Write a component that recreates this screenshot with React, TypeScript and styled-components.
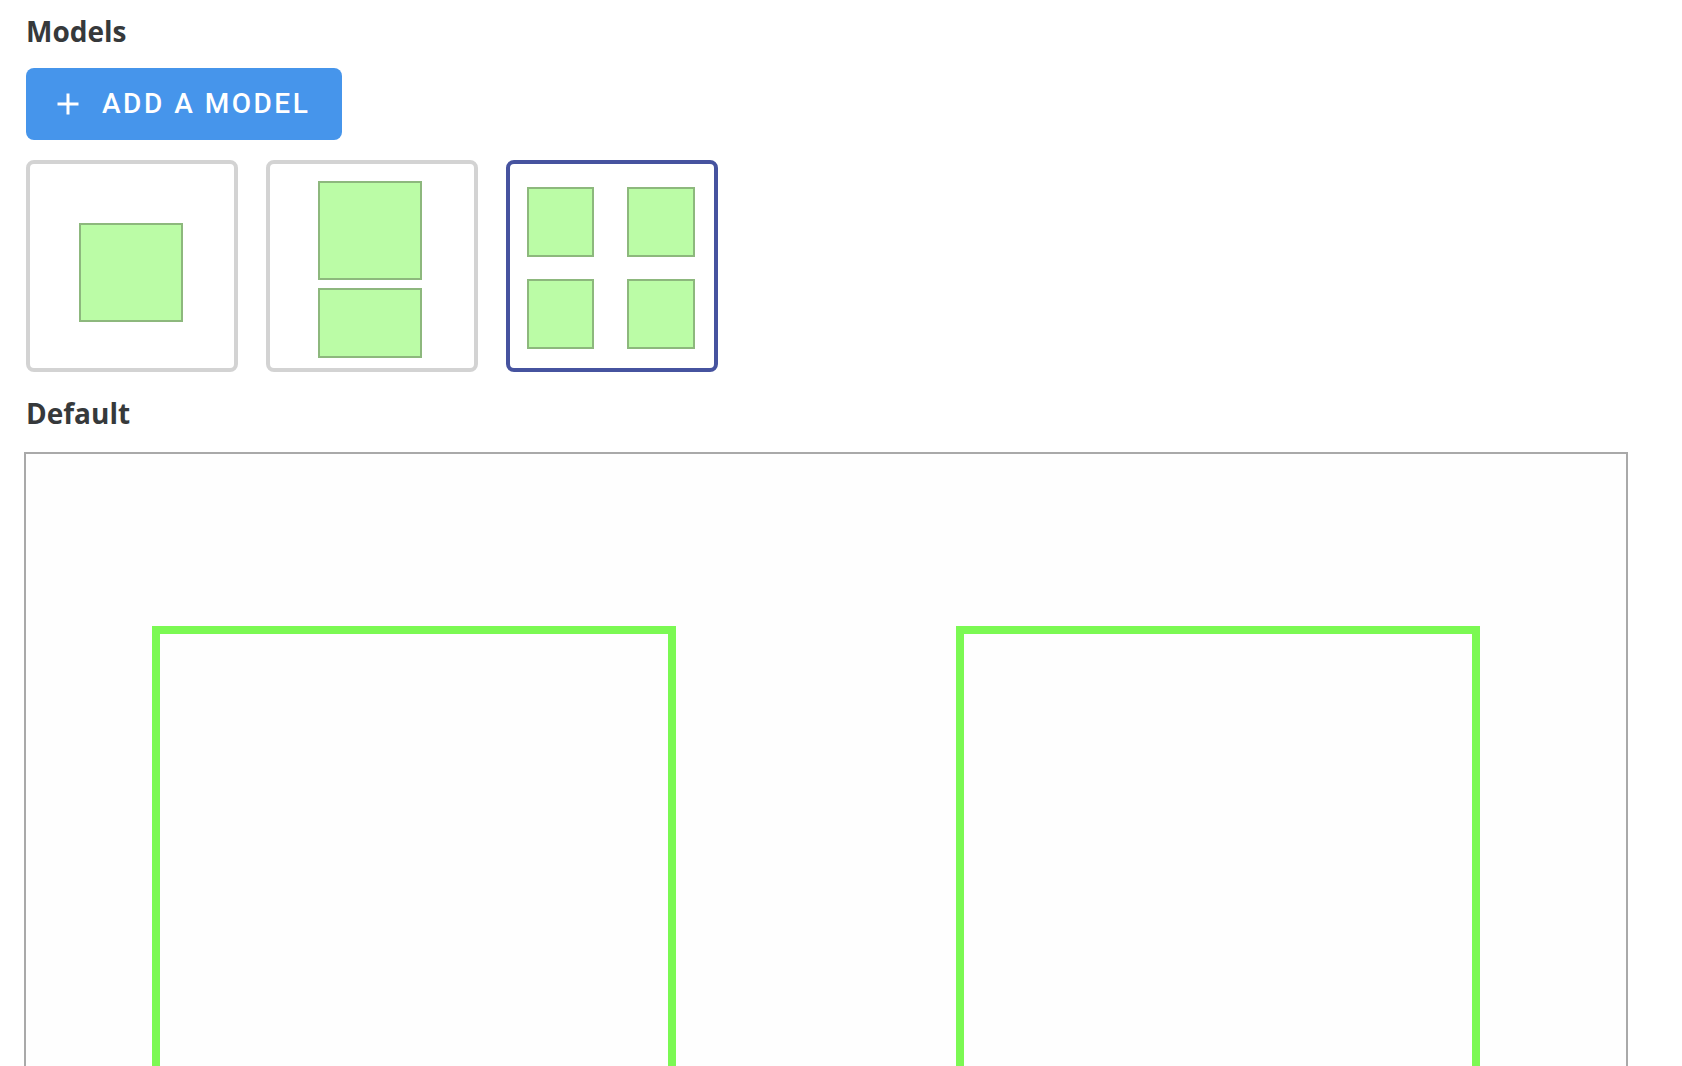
import React, { useState } from "react";
import styled, { createGlobalStyle } from "styled-components";

const GlobalStyle = createGlobalStyle`
  *, *::before, *::after { box-sizing: border-box; }
  body { margin: 0; background: #fff; color: #36393b; font-family: "Open Sans", "Noto Sans", sans-serif; }
`;

const Page = styled.main`
  display: flex;
  flex-direction: column;
  height: 100vh;
  overflow: hidden;
  padding: 12px 54px 0 24px;
`;

const Section = styled.section`
  display: flex;
  flex-direction: column;
  align-items: flex-start;
  padding: 0 2px;
`;

const Heading = styled.h2`
  margin: 0;
  font-size: 28px;
  font-weight: 700;
  line-height: 38px;
`;

const AddButton = styled.button`
  display: flex;
  align-items: center;
  gap: 16px;
  height: 72px;
  margin: 18px 0 20px;
  padding: 0 32px 0 24px;
  border: 0;
  border-radius: 8px;
  background: #4695eb;
  color: #fff;
  font: 500 28px/36px Roboto, sans-serif;
  letter-spacing: 0.09em;
  text-transform: uppercase;
  cursor: pointer;
`;

const PlusIcon = styled.svg`
  width: 36px;
  height: 36px;
  fill: currentColor;
`;

const ModelList = styled.div`
  display: flex;
  flex-wrap: wrap;
  gap: 28px;
`;

const ModelCard = styled.button<{ $selected: boolean }>`
  width: 212px;
  height: 212px;
  padding: 0;
  border: 4px solid ${(p) => (p.$selected ? "#46539f" : "#d3d3d3")};
  border-radius: 8px;
  background: #fff;
  cursor: pointer;
`;

const Thumbnail = styled.svg`
  display: block;
  width: 100%;
  height: 100%;

  rect {
    fill: #bbfca6;
    stroke: #8db87d;
    stroke-width: 2;
  }
`;

const Preview = styled.section`
  display: flex;
  flex-direction: column;
  gap: 20px;
  margin-top: 22px;
`;

const PreviewTitle = styled(Heading)`
  padding: 0 2px;
`;

const Canvas = styled.div`
  display: grid;
  grid-template-columns: 126fr 524fr 280fr 524fr 146fr;
  flex: none;
  aspect-ratio: 1;
  padding: 172px 0;
  border: 2px solid #a9a9a9;
  background: #fefefe;
`;

const Frame = styled.div<{ $column: number }>`
  grid-column: ${(p) => p.$column};
  border: 8px solid #7bf953;
`;

type Box = [x: number, y: number, width: number, height: number];

const models: { name: string; boxes: Box[] }[] = [
  { name: "One frame", boxes: [[50, 60, 102, 97]] },
  { name: "Two frames", boxes: [[49, 18, 102, 97], [49, 125, 102, 68]] },
  {
    name: "Four frames",
    boxes: [[18, 24, 65, 68], [118, 24, 66, 68], [18, 116, 65, 68], [118, 116, 66, 68]],
  },
];

export default function App() {
  const [selected, setSelected] = useState(2);

  return (
    <>
      <GlobalStyle />
      <Page>
        <Section>
          <Heading>Models</Heading>
          <AddButton type="button">
            <PlusIcon viewBox="0 0 24 24" aria-hidden="true">
              <path d="M19 13h-6v6h-2v-6H5v-2h6V5h2v6h6z" />
            </PlusIcon>
            Add a model
          </AddButton>
          <ModelList>
            {models.map((model, index) => (
              <ModelCard
                key={model.name}
                type="button"
                aria-label={model.name}
                aria-pressed={index === selected}
                $selected={index === selected}
                onClick={() => setSelected(index)}
              >
                <Thumbnail viewBox="0 0 204 204" aria-hidden="true">
                  {model.boxes.map(([x, y, width, height]) => (
                    <rect key={`${x}-${y}`} x={x} y={y} width={width} height={height} />
                  ))}
                </Thumbnail>
              </ModelCard>
            ))}
          </ModelList>
        </Section>
        <Preview>
          <PreviewTitle>Default</PreviewTitle>
          <Canvas>
            <Frame $column={2} />
            <Frame $column={4} />
          </Canvas>
        </Preview>
      </Page>
    </>
  );
}
